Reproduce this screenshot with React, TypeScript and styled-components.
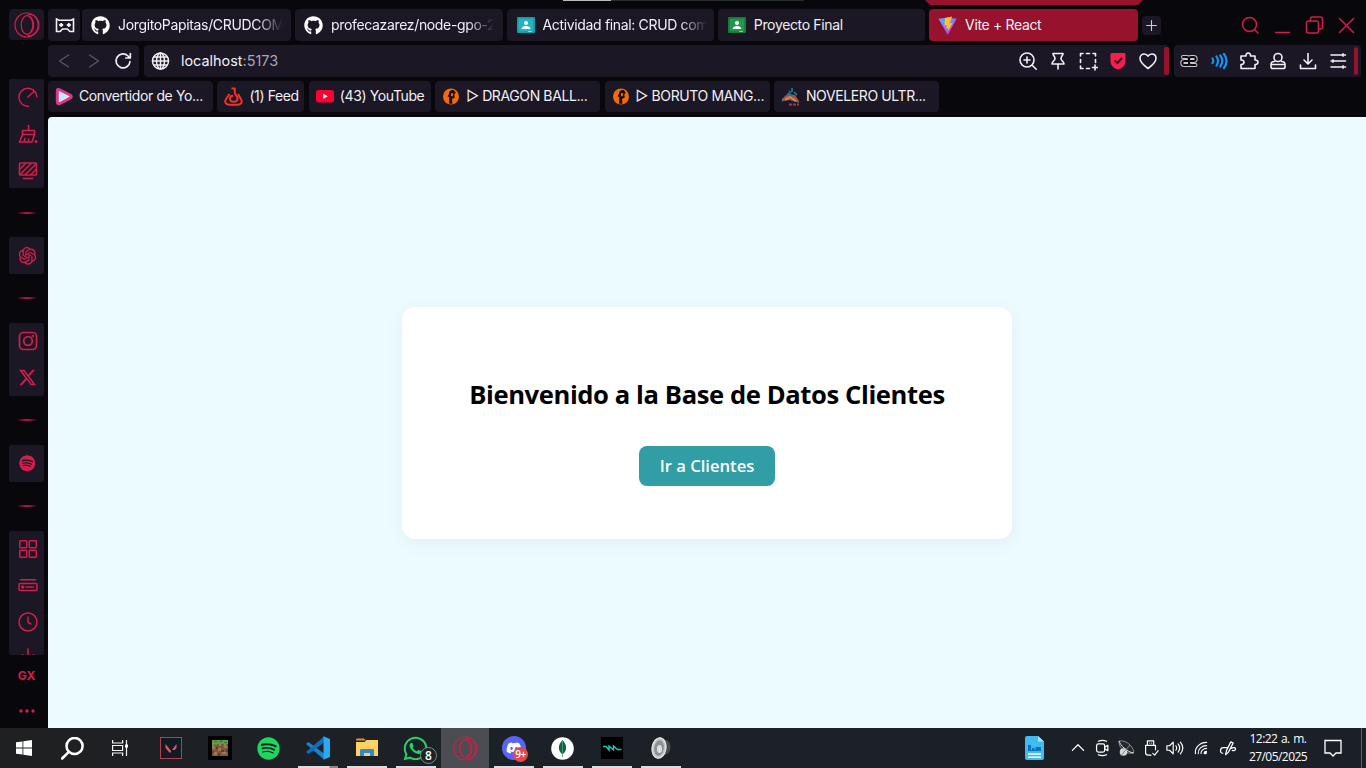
import React from "react";
import styled, { createGlobalStyle, css } from "styled-components";
import { FaGithub, FaSpotify, FaWhatsapp, FaDiscord } from "react-icons/fa";
import { FaXTwitter } from "react-icons/fa6";
import { AiOutlineOpenAI } from "react-icons/ai";

const color = {
  frame: "#08080c",
  panel: "#1b1725",
  accent: "#d11e4a",
  active: "#96122d",
  text: "#f1f0f6",
  page: "#ecfbff",
};

const GlobalStyle = createGlobalStyle`
  * { box-sizing: border-box; }
  body { margin: 0; overflow: hidden; background: ${color.frame}; }
  svg { display: block; flex: none; }
`;

/* ---------- layout ---------- */

const Screen = styled.div`
  width: 1366px;
  height: 768px;
  display: flex;
  flex-direction: column;
  overflow: hidden;
  background: ${color.frame};
  font-family: Inter, "Liberation Sans", sans-serif;
  color: ${color.text};
`;

const Browser = styled.div`
  position: relative;
  flex: none;
  height: 728px;
  display: flex;
`;

const Sidebar = styled.nav`
  width: 48px;
  padding: 9px 4px 0 9px;
  display: flex;
  flex-direction: column;
  color: ${color.accent};
`;

const OperaButton = styled.div`
  flex: none;
  height: 31px;
  margin-bottom: 39px;
  border-radius: 4px;
  background: ${color.panel};
  display: grid;
  place-items: center;
`;

const SideGroup = styled.div<{ $height: number }>`
  flex: none;
  height: ${(p) => p.$height}px;
  overflow: hidden;
  border-radius: 2px;
  background: ${color.panel};
`;

const SideItem = styled.div`
  height: 36.4px;
  padding-left: 2px;
  display: grid;
  place-items: center;
`;

const SideDivider = styled.div`
  flex: none;
  height: 49.2px;
  display: grid;
  place-items: center;
  &::after {
    content: "";
    width: 20px;
    height: 2px;
    background: linear-gradient(90deg, transparent, #a3193b 40%, #a3193b 60%, transparent);
  }
`;

const SideFoot = styled.div`
  height: 36px;
  margin-top: 4px;
  display: grid;
  place-items: center;
  font: 700 12px/1 Inter, sans-serif;
  & + & { margin-top: 0; }
`;

const Main = styled.div`
  flex: 1;
  min-width: 0;
  display: flex;
  flex-direction: column;
`;

const Strip = styled.div<{ $height: number; $gap: number; $top: number }>`
  flex: none;
  height: ${(p) => p.$height}px;
  margin-top: ${(p) => p.$top}px;
  display: flex;
  align-items: center;
  gap: ${(p) => p.$gap}px;
`;

const block = css`
  height: 100%;
  border-radius: 4px;
  background: ${color.panel};
  display: flex;
  align-items: center;
`;

const Pinned = styled.div`
  ${block}
  width: 32px;
  margin-right: -2px;
  padding-left: 2px;
  justify-content: center;
`;

const Tab = styled.div<{ $width: number; $active?: boolean }>`
  ${block}
  flex: none;
  width: ${(p) => p.$width}px;
  padding: 0 9px 0 9px;
  gap: 8px;
  ${(p) => p.$active && css`background: ${color.active};`}
`;

const TabTitle = styled.span<{ $fade?: boolean }>`
  flex: 1;
  white-space: nowrap;
  font-size: 14px;
  line-height: 20px;
  letter-spacing: -0.34px;
  ${(p) => p.$fade && css`
    mask-image: linear-gradient(90deg, #000 calc(100% - 28px), transparent calc(100% - 1px));
  `}
`;

const NewTab = styled.div`
  width: 19px;
  height: 19px;
  border-radius: 4px;
  background: ${color.panel};
  display: grid;
  place-items: center;
`;

const WindowControls = styled.div`
  margin-left: auto;
  padding-right: 10px;
  display: flex;
  gap: 12px;
  color: ${color.accent};
`;

const NavGroup = styled.div`
  ${block}
  width: 91px;
  padding-left: 6px;
  gap: 9.5px;
`;

const AddressBar = styled.div`
  ${block}
  width: 1025px;
  padding-left: 6px;
`;

const Url = styled.div`
  flex: 1;
  margin-left: 11px;
  padding-bottom: 1px;
  font-size: 14.4px;
  span { color: #aaa6bb; }
`;

const Actions = styled.div`
  display: flex;
  gap: 9.8px;
`;

const RedHandle = styled.i<{ $left: number; $right: number }>`
  width: 5px;
  height: 28px;
  margin: 0 ${(p) => p.$right}px 0 ${(p) => p.$left}px;
  border-radius: 2px;
  background: ${color.active};
`;

const Extensions = styled.div`
  ${block}
  width: 187px;
  padding-left: 5px;
`;

const Bookmark = styled.div<{ $width: number }>`
  ${block}
  flex: none;
  width: ${(p) => p.$width}px;
  padding: 0 0 1px 7px;
  gap: 6px;
  white-space: nowrap;
  font-size: 14px;
  line-height: 20px;
  letter-spacing: -0.39px;
`;

const TopLine = styled.div`
  position: absolute;
  left: 563px;
  top: 0;
  width: 241px;
  height: 1px;
  background: linear-gradient(90deg, #b9bcbb 48px, #2a2b2d 48px);
`;

const ActiveMarker = styled.div`
  position: absolute;
  left: 925px;
  top: 0;
  width: 218px;
  height: 5px;
  background: ${color.active};
  clip-path: polygon(0 0, 100% 0, calc(100% - 5px) 100%, 5px 100%);
`;

/* ---------- page ---------- */

const Page = styled.main`
  flex: 1;
  margin-top: 5px;
  padding-top: 1px;
  border-top-left-radius: 4px;
  background: ${color.page};
  display: flex;
  align-items: center;
  justify-content: center;
`;

const Card = styled.section`
  width: 610px;
  height: 232px;
  padding-top: 70px;
  border-radius: 13px;
  background: #fff;
  box-shadow: 0 4px 20px rgba(0, 0, 0, 0.05);
  display: flex;
  flex-direction: column;
  align-items: center;
`;

const Heading = styled.h1`
  margin: 0 0 33px;
  color: #000;
  font: 700 25.6px/36px "Open Sans", "Noto Sans", sans-serif;
  letter-spacing: -0.4px;
  white-space: nowrap;
`;

const PrimaryButton = styled.button`
  width: 136px;
  height: 40px;
  padding: 0;
  border: 0;
  border-radius: 8px;
  background: #319da5;
  color: #fff;
  font: 600 16.6px/24px "Open Sans", "Noto Sans", sans-serif;
  white-space: nowrap;
`;

/* ---------- taskbar ---------- */

const Taskbar = styled.footer`
  flex: none;
  height: 40px;
  display: flex;
  background: linear-gradient(90deg, #1f2022, #1c2127 35%, #1b2028);
`;

const SystemCell = styled.div`
  width: 48px;
  display: grid;
  place-items: center;
  & + & + & { margin-right: 3px; }
`;

const AppCell = styled.div<{ $running?: boolean; $active?: boolean; $split?: boolean }>`
  position: relative;
  width: 49px;
  padding-right: 2px;
  display: grid;
  place-items: center;
  ${(p) => p.$active && css`
    background: #4b4d52;
    background-clip: content-box;
    padding-right: 1px;
  `}
  ${(p) => p.$running && css`
    &::after {
      content: "";
      position: absolute;
      left: 4px;
      bottom: 0;
      width: 40px;
      height: 2px;
      background: ${p.$split ? "linear-gradient(90deg, #dcdce0 31px, #85878b 32px)" : "#dcdce0"};
    }
  `}
`;

const Badge = styled.span<{ $red?: boolean }>`
  position: absolute;
  left: 28px;
  top: 19px;
  width: 17px;
  height: 17px;
  border-radius: 50%;
  border: 1px solid #85898c;
  background: #1d2225;
  color: #fff;
  font: 600 12px/15px "Open Sans", sans-serif;
  text-align: center;
  ${(p) => p.$red && css`
    width: 15px;
    height: 15px;
    left: 23px;
    top: 19px;
    border: 0;
    background: #e5484d;
    font-size: 10px;
    line-height: 15px;
    letter-spacing: -0.4px;
  `}
`;

const Tray = styled.div`
  margin-left: auto;
  display: flex;
  align-items: center;
  color: #fff;
`;

const TrayCell = styled.div<{ $width: number }>`
  width: ${(p) => p.$width}px;
  padding-left: 1px;
  display: grid;
  place-items: center;
`;

const Clock = styled.div`
  width: 76px;
  text-align: center;
  white-space: nowrap;
  font: 400 12px/18px "Open Sans", "Noto Sans", sans-serif;
  letter-spacing: -0.55px;
  word-spacing: 1px;
`;

const ShowDesktop = styled.div`
  width: 5px;
  height: 40px;
  border-left: 1px solid #5d6065;
`;

/* ---------- icons ---------- */

type IconProps = { size?: number; w?: number; c?: string; children?: React.ReactNode };

const Line = ({ size = 20, w = 1.6, c = "currentColor", children }: IconProps) => (
  <svg width={size} height={size} viewBox="0 0 20 20" fill="none" stroke={c} strokeWidth={w} strokeLinecap="round" strokeLinejoin="round">
    {children}
  </svg>
);

const OperaIcon = ({ size = 26 }: { size?: number }) => (
  <svg width={size} height={size} viewBox="0 0 26 26" fill="none" stroke="#d11e4a" strokeWidth="1.2">
    <ellipse cx="12.6" cy="13" rx="11.6" ry="12" />
    <ellipse cx="13" cy="13" rx="5.8" ry="9.3" />
    <path d="M13 3.700c2-1.700 4.500-1.700 6.800-.2 6.800 4.500 6.800 14.500 0 19-2.300 1.500-4.800 1.500-6.800-.2" />
    <path d="M15.500 4.500c5.500 3.500 5.500 13.500 0 17" />
  </svg>
);

const ClassroomIcon = ({ a, b }: { a: string; b: string }) => (
  <svg width="19" height="16" viewBox="-1 0 19 16">
    <rect width="18" height="16" rx="1" fill={a} />
    <rect x="1.8" y="1.8" width="14.4" height="12.4" fill={b} />
    <circle cx="9" cy="6" r="2" fill="#fff" />
    <path d="M4.6 12c0-2 2.2-3 4.4-3s4.4 1 4.4 3z" fill="#fff" />
    <path d="M11 14h4v1h-4z" fill="#fff" opacity=".5" />
  </svg>
);

const ViteIcon = () => (
  <svg width="19" height="19" viewBox="0 0 19 19">
    <defs>
      <linearGradient id="vite" x1="0" y1="0" x2=".7" y2="1">
        <stop offset="0" stopColor="#41b5ff" />
        <stop offset=".6" stopColor="#9a6bff" />
        <stop offset="1" stopColor="#bd34fe" />
      </linearGradient>
    </defs>
    <path d="M.5 2.800 9 1.800l9.500 1L9.800 18.900z" fill="url(#vite)" />
    <path d="m14 .5-7 1.400-.6 7.600 2.600-.5-.8 3.600 2.100-.4-.6 3.400 4.900-8.600-2.900.4z" fill="#ffc31f" />
  </svg>
);

const ConverterIcon = () => (
  <svg width="18" height="19" viewBox="0 0 18 19">
    <path d="M4 2.500 15 8c1.700.9 1.700 2.300 0 3.200L5 16.500c-1.500.8-2.700.2-2.700-1.500V4c0-1.500.5-2 1.700-1.500z" fill="#f4f7ff" stroke="#d83a82" strokeWidth="3" strokeLinejoin="round" />
    <path d="M5 5v9l8.500-4.500z" fill="#cfe3f6" />
  </svg>
);

const BandlabIcon = () => (
  <svg width="19" height="19" viewBox="0 0 19 19" fill="none" stroke="#ee3524" strokeWidth="2" strokeLinejoin="round">
    <path d="M5.500 7 2 12.300c-1.700 2.900-.2 5.400 3 5.400h9c3.200 0 4.700-2.500 3-5.400L14 7" />
    <path d="M7.500 1.500h3.300v4.300c0 2 2.700 3 2.700 5.700 0 2-1.500 3.300-3.800 3.300S6 13.500 6 11.700s1.400-3 3.200-3" />
  </svg>
);

const YoutubeIcon = () => (
  <svg width="18" height="13" viewBox="0 0 18 13">
    <rect width="18" height="12.600" rx="2.500" fill="#ff0033" />
    <path d="M7.200 3.700v5.200l4.500-2.600z" fill="#fff" />
  </svg>
);

const AnimeIcon = () => (
  <svg width="18" height="17" viewBox="-1 0 18 17">
    <circle cx="8" cy="8.500" r="8" fill="#f26a0a" />
    <path d="M10.500 2C7 2 5.800 3.800 6 6L4.500 8.500 6.200 9v6.800h3.200L9 11l2.800-1.500-.5-3 1.500-2z" fill="#17100e" />
    <path d="M8 5.200h2.400L9.600 8.600 8 8z" fill="#f26a0a" />
  </svg>
);

const NovelIcon = () => (
  <svg width="19" height="19" viewBox="0 0 19 19" fill="none">
    <path d="M1 12 5 8l4 1 5-1 4 6-8-1-9 1z" fill="#c9452f" />
    <path d="m7 6 3 2 4 1M11 5V1M8 4l2 2M13 5l3 3" stroke="#2c8293" strokeWidth="1.500" />
    <path d="m1 14 5-4 5 3 7 2M6 7l7 5" stroke="#27899a" strokeWidth="1.400" />
    <path d="m4 13 5-3 6 4" stroke="#ef7e48" strokeWidth="1.800" />
    <path d="M8 17.500h10" stroke="#c62c38" strokeWidth="2" strokeDasharray="3 1" />
  </svg>
);

const Github = () => <FaGithub size={19} color="#fff" />;

const MaskIcon = () => (
  <svg width="20" height="18" viewBox="0 0 20 18" fill="none" stroke="#f2f2f5" strokeWidth="1.600">
    <path d="M1.500 3 4 4.200h12L18.500 3v12.500h-3.700L12.500 13h-5l-2.300 2.500H1.500z" />
    <path d="M6.200 7v4M4.200 9h4M13.800 7v4M11.800 9h4" strokeWidth="1.800" />
  </svg>
);

const tabs = [
  { title: "JorgitoPapitas/CRUDCOM", icon: <Github />, width: 209, fade: true },
  { title: "profecazarez/node-gpo-2", icon: <Github />, width: 207.5, fade: true },
  { title: "Actividad final: CRUD com", icon: <ClassroomIcon a="#149baa" b="#24b2c1" />, width: 207.3, fade: true },
  { title: "Proyecto Final", icon: <ClassroomIcon a="#167b39" b="#21974d" />, width: 207.3 },
  { title: "Vite + React", icon: <ViteIcon />, width: 209, active: true },
];

const bookmarks = [
  { title: "Convertidor de Yo...", icon: <ConverterIcon />, width: 165 },
  { title: "(1) Feed", icon: <BandlabIcon />, width: 87 },
  { title: "(43) YouTube", icon: <YoutubeIcon />, width: 122 },
  { title: "▷ DRAGON BALL...", icon: <AnimeIcon />, width: 165 },
  { title: "▷ BORUTO MANG...", icon: <AnimeIcon />, width: 165 },
  { title: "NOVELERO ULTR...", icon: <NovelIcon />, width: 165 },
];

/* ---------- sections ---------- */

const SidePanel = () => (
  <Sidebar>
    <OperaButton><OperaIcon /></OperaButton>
    <SideGroup $height={109}>
      <SideItem>
        <Line w={1.500}><path d="M10.500 19.200A9 9 0 1 1 18.900 10M9.800 10l6.200-5.500" /></Line>
      </SideItem>
      <SideItem>
        <Line w={1.600}><path d="M10.500 1.500V6M4.500 6.500h12v4h-12zM4.500 10.500 1.500 18H14l2.500-7.500M6 18l1-3.500M10.500 18v-3" /><circle cx="18" cy="17.500" r=".8" fill="currentColor" /></Line>
      </SideItem>
      <SideItem>
        <Line w={1.600}><rect x="1.500" y="3" width="17" height="12" rx="1" /><path d="m2 9 5.500-5.500M2.500 14 13 3.500M7.500 14.500 18 4M13 14.500l5-5" /><path d="M5.500 18.500h9" /></Line>
      </SideItem>
    </SideGroup>
    <SideDivider />
    <SideGroup $height={36.500}><SideItem><AiOutlineOpenAI size={23} /></SideItem></SideGroup>
    <SideDivider />
    <SideGroup $height={73}>
      <SideItem>
        <Line w={1.700}><rect x="1.500" y="1.500" width="17" height="17" rx="4" /><circle cx="10" cy="10" r="4.300" /><circle cx="14.800" cy="5.200" r=".5" /></Line>
      </SideItem>
      <SideItem><FaXTwitter size={19} /></SideItem>
    </SideGroup>
    <SideDivider />
    <SideGroup $height={36.500}><SideItem><FaSpotify size={16.500} /></SideItem></SideGroup>
    <SideDivider />
    <SideGroup $height={124}>
      <SideItem>
        <Line w={1.500}><rect x="1.800" y="1.800" width="7" height="7" rx=".7" /><rect x="11.300" y="1.800" width="7" height="7" rx=".7" /><rect x="1.800" y="11.300" width="7" height="7" rx=".7" /><rect x="11.300" y="11.300" width="7" height="7" rx=".7" /></Line>
      </SideItem>
      <SideItem>
        <Line w={1.500}><path d="M2.500 4.800h15" /><rect x="1" y="8.500" width="18" height="7" rx="1.200" /><path d="M8 12h7.500" /><rect x="4" y="11.200" width="1.500" height="1.500" /></Line>
      </SideItem>
      <SideItem>
        <Line w={1.500}><circle cx="10" cy="10" r="9" /><path d="M10 5v5.500l3 1.500" /></Line>
      </SideItem>
      <SideItem>
        <Line w={1.500}><path d="M10 1v10M4 7h1M15 7h1" /></Line>
      </SideItem>
    </SideGroup>
    <SideFoot>GX</SideFoot>
    <SideFoot>
      <svg width="16" height="4" viewBox="0 0 16 4" fill="currentColor"><circle cx="2" cy="2" r="1.700" /><circle cx="8" cy="2" r="1.700" /><circle cx="14" cy="2" r="1.700" /></svg>
    </SideFoot>
  </Sidebar>
);

const aeStrokes = "M4 6h3.500Q10 6 10 8.200V14M10 10H5.500q-2.200 0-2.200 2t2.200 2H10M10 8.200Q10 6 12.200 6h2.300q2.200 0 2.200 2t-2.200 2H10M10 12q0 2 2.500 2h4";

const Toolbar = () => (
  <Strip $height={32} $gap={5} $top={4}>
    <NavGroup>
      <Line c="#5b5865" w={1.300}><path d="M14.500 4 5.500 10l9 6" /></Line>
      <Line c="#5b5865" w={1.300}><path d="m5.500 4 9 6-9 6" /></Line>
      <Line c="#ededf2" w={1.700}><path d="M17 10.500a7 7 0 1 1-2-5.500l2 2M17.300 2.500V7h-4.500" /></Line>
    </NavGroup>
    <AddressBar>
      <Line c="#f0f0f4" w={1.500}><circle cx="10.500" cy="10" r="8" /><ellipse cx="10.500" cy="10" rx="4" ry="8" /><path d="M10.500 2v16M2.500 10h16M3.700 6h13.600M3.700 14h13.600" /></Line>
      <Url>localhost<span>:5173</span></Url>
      <Actions>
        <Line><circle cx="9" cy="9" r="7" /><path d="m14.200 14.200 4 4M6 9h6M9 6v6" /></Line>
        <Line><path d="M5 2.500h10c0 2.500-2 2.500-2 5s3 2.500 3 5.500H4c0-3 3-3 3-5.500s-2-2.500-2-5zM10 13v5" /></Line>
        <Line><path d="M2.500 5V2.500H5M8.500 2.500h3M15 2.500h2.500V5M17.500 8.500v3M2.500 8.500v3M2.500 15v2.500H5M8.500 17.500h3M17 14v5M14.500 16.500h5" /></Line>
        <svg width="20" height="20" viewBox="0 0 20 20"><path d="M4 2h12c1 0 1.500.5 1.500 1.500V10c0 4.500-3.300 7.500-7.500 8.500C5.800 17.500 2.500 14.500 2.500 10V3.500C2.500 2.500 3 2 4 2z" fill="#fa1e4e" /><path d="m6.500 9.500 3 2.500 4.500-5" fill="none" stroke="#291523" strokeWidth="2" /></svg>
        <Line><path d="M10 17.500C6 14.500 2 11.500 2 7.500 2 4.700 3.900 3 6.200 3 8 3 9.300 4 10 5.200 10.700 4 12 3 13.800 3 16.100 3 18 4.700 18 7.500c0 4-4 7-8 10z" /></Line>
      </Actions>
      <RedHandle $left={6} $right={0.500} />
    </AddressBar>
    <Extensions>
      <Actions>
        <svg width="20" height="20" viewBox="0 0 20 20" fill="none" strokeLinecap="round">
          <path d={aeStrokes} stroke="#c9c9ce" strokeWidth="4" />
          <path d={aeStrokes} stroke="#0d0b12" strokeWidth="1.900" />
        </svg>
        <Line c="#1694f5" w={2.200}><path d="M3.500 7.500c1 1.500 1 3 0 4.500M7.500 5.500c2 3 2 6 0 9M11.300 4.500c2.500 3.500 2.500 7.500 0 11M15 3c3.300 4.500 3.300 9.500 0 14" /></Line>
        <Line w={1.600}><path d="M2 5h5c-.5-4 5-4 4.500 0H16v4c4-.5 4 5 0 4.500v4H2v-4c4 .5 4-5 0-4.500z" /></Line>
        <Line><circle cx="10" cy="6.500" r="4" /><path d="M6.500 10.500C4 10.500 3 12 3 13.500v2.200c0 1 .8 1.800 1.800 1.800h10.400c1 0 1.800-.8 1.800-1.800v-2.200c0-1.500-1-3-3.500-3M3.500 13.500h13" /></Line>
        <Line><path d="M10 2.500v10M6 9l4 4 4-4M2.500 14v3.500h15V14" /></Line>
        <Line w={1.500}><path d="M3 4h14.500M3 10h14.500M3 16h14.500M15 2.700v2.600M5 8.700v2.600M15 14.700v2.600" /></Line>
      </Actions>
      <RedHandle $left={6.500} $right={3} />
    </Extensions>
  </Strip>
);

const TabStrip = () => (
  <Strip $height={32} $gap={4} $top={9}>
    <Pinned><MaskIcon /></Pinned>
    {tabs.map((t) => (
      <Tab key={t.title} $width={t.width} $active={t.active}>
        {t.icon}
        <TabTitle $fade={t.fade}>{t.title}</TabTitle>
      </Tab>
    ))}
    <NewTab><Line size={15} c="#d0ccda" w={1.500}><path d="M10 3.500v13M3.500 10h13" /></Line></NewTab>
    <WindowControls>
      <Line w={1.500}><circle cx="9.500" cy="9.500" r="7" /><path d="m14.500 14.500 3.500 3.500" /></Line>
      <Line w={1.500}><path d="M3.500 17.500h14" /></Line>
      <Line w={1.500}><rect x="2.500" y="6" width="12" height="12" rx="2" /><path d="M6.500 6V4c0-1 .8-2 2-2h8c1.200 0 2 .8 2 2v8c0 1.200-1 2-2 2h-2" /></Line>
      <Line w={1.500}><path d="m3.500 3.500 14 14M17.500 3.500l-14 14" /></Line>
    </WindowControls>
  </Strip>
);

const Apps = () => (
  <>
    <AppCell>
      <svg width="22" height="22" viewBox="0 0 22 22"><rect x=".5" y=".5" width="21" height="21" fill="#111b26" stroke="#b53e4c" /><path d="M5.500 7 11 14v1.500H9.300L5.500 10.800zM16.500 7v3.800l-1.700 2.100H12z" fill="#f4515f" /></svg>
    </AppCell>
    <AppCell>
      <svg width="24" height="24" viewBox="0 0 24 24" shapeRendering="crispEdges">
        <rect width="24" height="24" fill="#000" />
        <rect x="4" y="4" width="16" height="16" fill="#80583e" />
        <path d="M4 10h3v3H4zM10 12h3v3h-3zM16 10h3v2h-3zM6 16h3v3H6zM14 16h4v2h-4z" fill="#a3764f" />
        <path d="M8 11h2v2H8zM13 14h3v2h-3zM4 15h2v2H4zM10 17h2v3h-2zM18 13h2v3h-2z" fill="#5c3d2d" />
        <path d="M4 4h16v4h-2v2h-2V8h-3v2h-2V8H9v1H7V8H6v2H4z" fill="#63994b" />
        <path d="M6 5h3v1H6zM12 4h2v2h-2zM16 6h3v1h-3z" fill="#40742f" />
      </svg>
    </AppCell>
    <AppCell><FaSpotify size={23} color="#1ed760" /></AppCell>
    <AppCell $running $split>
      <svg width="24" height="24" viewBox="0 0 24 24">
        <path d="M0 8 2.500 6 18 17.500v6z" fill="#1684d0" />
        <path d="m0 16 2.500 2L18 6.500v-6z" fill="#0f6fb8" />
        <path d="M17.500.3 24 3v18l-6.500 2.700z" fill="#2ba8f0" />
      </svg>
    </AppCell>
    <AppCell $running>
      <svg width="22" height="20" viewBox="0 0 22 20"><path d="M0 2c0-1 .5-1.500 1.500-1.500H8L10 2.500H0z" fill="#dc9a12" /><path d="M0 4h8.500l2-2H22v16H0z" fill="#fdd163" /><path d="M4 18v-5.500c0-1 .5-1.500 1.500-1.500h11c1 0 1.500.5 1.500 1.500V18h-4v-3H8v3z" fill="#3589c9" /></svg>
    </AppCell>
    <AppCell $running><FaWhatsapp size={27} color="#25d366" /><Badge>8</Badge></AppCell>
    <AppCell $active><OperaIcon size={25} /></AppCell>
    <AppCell $running>
      <svg width="24" height="24" viewBox="0 0 24 24"><circle cx="12" cy="12" r="12" fill="#5865f2" /><g transform="translate(4 4)"><FaDiscord size={16} color="#fff" /></g></svg>
      <Badge $red>9+</Badge>
    </AppCell>
    <AppCell $running>
      <svg width="23" height="23" viewBox="0 0 23 23"><circle cx="11.500" cy="11.500" r="11.300" fill="#fff" /><path d="M11.500 3c5 5.500 4.800 10.500 0 14.500-4.800-4-5-9 0-14.500z" fill="#116149" /><path d="M11.500 3v17" stroke="#50a078" strokeWidth=".8" /></svg>
    </AppCell>
    <AppCell $running>
      <svg width="22" height="22" viewBox="0 0 22 22"><rect width="22" height="22" fill="#000" /><path d="M2 9.500h3l3 3.500V9l4.500 4V9l4 3.500h4" fill="none" stroke="#20c8ba" strokeWidth="1.400" /></svg>
    </AppCell>
    <AppCell $running>
      <svg width="20" height="22" viewBox="0 0 20 22"><path d="m9 1 8 3c3 3 3 9 0 12l-8 5z" fill="#66696b" /><path d="m14 3 3 1c3 3 3 9 0 12l-3 2z" fill="#46494b" /><ellipse cx="8" cy="11" rx="7" ry="10.300" fill="#c4c7c8" stroke="#f3f3f3" transform="rotate(8 8 11)" /><ellipse cx="8" cy="11" rx="4.800" ry="7.800" fill="#8e9193" transform="rotate(8 8 11)" /><ellipse cx="8.500" cy="12" rx="2.500" ry="4" fill="#dfe0e1" /></svg>
    </AppCell>
  </>
);

const SystemTray = () => (
  <Tray>
    <TrayCell $width={64}>
      <svg width="19" height="24" viewBox="0 0 19 24"><path d="M2 0h11l6 5.500V22c0 1.200-.8 2-2 2H2c-1.200 0-2-.8-2-2V2C0 .8.800 0 2 0z" fill="#40baf2" /><path d="M13 0v5.500h6z" fill="#a5e5ff" /><path d="M3 9h3v6H3zM7 12h2.500v3H7zM10.500 11H16v4h-5.500z" fill="#0874ba" /><path d="M3 14.500h13" stroke="#0874ba" /><path d="M3 18h13M3 21.300h13" stroke="#fff" strokeWidth="1.600" /></svg>
    </TrayCell>
    <TrayCell $width={23}><Line size={16} w={1.600}><path d="m3 13 7-7 7 7" /></Line></TrayCell>
    <TrayCell $width={25}><Line size={18} w={1.400}><rect x="4" y="5.500" width="9" height="9" rx="2" /><path d="m13 9 3.500-2v6L13 11M6 2.500c3-1.300 6-1.300 9 0M6 17.500c3 1.300 6 1.300 9 0" /></Line></TrayCell>
    <TrayCell $width={24}>
      <svg width="17" height="17" viewBox="0 0 17 17"><path d="M1 1c5-.5 8 1 11 4s4 6 3.500 8C10 14 7 12 4.500 9.500S1 5 1 1z" fill="#25282c" stroke="#8b8d90" /><path d="M1 1c1 4 8 11 14.500 12" stroke="#ddd" fill="none" /><circle cx="5.500" cy="12" r="3.800" fill="#d5d6d7" /><path d="M3 15.500 12 5" stroke="#85898c" /></svg>
    </TrayCell>
    <TrayCell $width={24}><Line size={18} w={1.300}><path d="M6 7V2h7v5M8.500 4.500h0M10.800 4.500h0M4 7h11v5M4 7v8c0 2 1 3 3 3h3M12 16l2 2 4-5" /></Line></TrayCell>
    <TrayCell $width={25}><Line size={18} w={1.300}><path d="M1 7.500h3l4-4v13l-4-4H1zM11 7.500c1 1.500 1 3.500 0 5M13.500 5.500c2.300 3 2.300 6 0 9M16 3.500c3.300 4 3.300 9 0 13" /></Line></TrayCell>
    <TrayCell $width={26}><Line size={16} w={1.400}><path d="M3 17C2 9 9 3 17 3M6.500 17C6 11 11 7 17 7M10 17c0-3.500 3-6.500 7-6.500M14 17c0-2 1-3 3-3" /><circle cx="15.500" cy="16" r="1.200" fill="currentColor" /></Line></TrayCell>
    <TrayCell $width={27}><Line size={19} w={1.300}><path d="M9 12 13.500 3l2.500 1.300-5 9.500-3 2.700zM9.500 9H5.500c-3.500 0-4 6-.5 6M13.500 10c3-1.500 5-1 5 .5s-2 2-3.500 1.500" /></Line></TrayCell>
    <Clock>12:22 a. m.<br />27/05/2025</Clock>
    <TrayCell $width={33}><Line size={20} w={1.300}><path d="M2 2.500h16v12.500h-5L10 18l-3-3H2z" strokeLinejoin="miter" /></Line></TrayCell>
    <TrayCell $width={12} />
    <ShowDesktop />
  </Tray>
);

export default function App() {
  return (
    <Screen>
      <GlobalStyle />
      <Browser>
        <SidePanel />
        <Main>
          <TabStrip />
          <Toolbar />
          <Strip $height={31} $gap={4.400} $top={4}>
            {bookmarks.map((b) => (
              <Bookmark key={b.title} $width={b.width}>{b.icon}<span>{b.title}</span></Bookmark>
            ))}
          </Strip>
          <Page>
            <Card>
              <Heading>Bienvenido a la Base de Datos Clientes</Heading>
              <PrimaryButton>Ir a Clientes</PrimaryButton>
            </Card>
          </Page>
        </Main>
        <TopLine />
        <ActiveMarker />
      </Browser>
      <Taskbar>
        <SystemCell>
          <svg width="16" height="16" viewBox="0 0 16 16" fill="#fff"><path d="M0 2.300 6.500 1.400v6.200H0zM7.300 1.300 16 0v7.600H7.300zM0 8.400h6.500v6.200L0 13.700zM7.300 8.400H16V16l-8.700-1.300z" /></svg>
        </SystemCell>
        <SystemCell>
          <Line size={23} w={2.200} c="#fff"><circle cx="11.800" cy="7.800" r="7" /><path d="M6.800 13 1 18.700" /></Line>
        </SystemCell>
        <SystemCell>
          <svg width="16" height="16" viewBox="0 0 16 16" fill="none" stroke="#f2f2f2" strokeWidth="1.200"><path d="M.6 0v3h10V0M.6 16v-3h10v3M.6 5.500h10v5H.6zM14.500 0v16" /><path d="M13 4.500h3v3h-3z" fill="#fff" stroke="none" /></svg>
        </SystemCell>
        <Apps />
        <SystemTray />
      </Taskbar>
    </Screen>
  );
}
